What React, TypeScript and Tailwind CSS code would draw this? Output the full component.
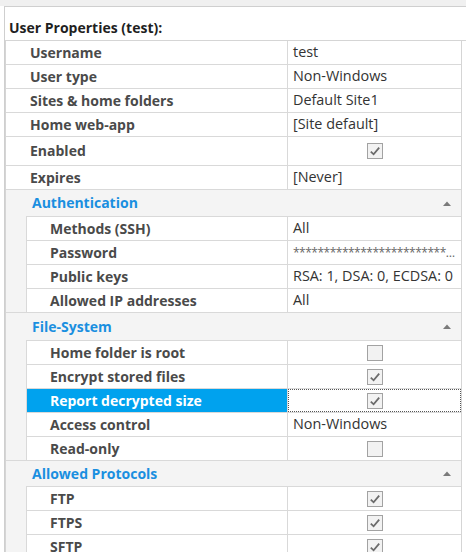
import React from "react";

type Val = string | { check: boolean };

type Row = { label: string; value: Val; h?: string; selected?: boolean; truncate?: boolean };

const topRows: Row[] = [
  { label: "Username", value: "test" },
  { label: "User type", value: "Non-Windows" },
  { label: "Sites & home folders", value: "Default Site1" },
  { label: "Home web-app", value: "[Site default]" },
  { label: "Enabled", value: { check: true }, h: "h-[29px]" },
  { label: "Expires", value: "[Never]" },
];

const groups: { title: string; h: string; rows: Row[] }[] = [
  {
    title: "Authentication",
    h: "h-[26px]",
    rows: [
      { label: "Methods (SSH)", value: "All" },
      { label: "Password", value: "*".repeat(40), truncate: true },
      { label: "Public keys", value: "RSA: 1, DSA: 0, ECDSA: 0" },
      { label: "Allowed IP addresses", value: "All" },
    ],
  },
  {
    title: "File-System",
    h: "h-[27px]",
    rows: [
      { label: "Home folder is root", value: { check: false } },
      { label: "Encrypt stored files", value: { check: true } },
      { label: "Report decrypted size", value: { check: true }, selected: true },
      { label: "Access control", value: "Non-Windows" },
      { label: "Read-only", value: { check: false } },
    ],
  },
  {
    title: "Allowed Protocols",
    h: "h-[25px]",
    rows: [
      { label: "FTP", value: { check: true } },
      { label: "FTPS", value: { check: true } },
      { label: "SFTP", value: { check: true } },
    ],
  },
];

function CheckBox({ checked }: { checked: boolean }) {
  return (
    <div className="w-[16px] h-[16px] border border-[#a2a2a2] bg-[#f2f2f2] flex items-center justify-center">
      {checked && (
        <svg width="14" height="14" viewBox="0 0 14 14">
          <polyline points="2.8,7.6 5.6,10.3 11.2,3.6" fill="none" stroke="#6b6b6b" strokeWidth="1.8" />
        </svg>
      )}
    </div>
  );
}

function Value({ row }: { row: Row }) {
  if (typeof row.value !== "string") {
    return (
      <div
        className={
          "flex-1 flex items-center justify-center h-full " +
          (row.selected ? "border border-dotted border-[#555]" : "")
        }
      >
        <CheckBox checked={row.value.check} />
      </div>
    );
  }
  if (row.truncate) {
    return (
      <div className="flex-1 min-w-0 pl-[5px] pr-[4px] flex items-center h-full">
        <span className="block overflow-hidden text-ellipsis whitespace-nowrap text-[#666] text-[12px] tracking-[-0.5px]">
          {row.value}
        </span>
      </div>
    );
  }
  return (
    <div className="flex-1 min-w-0 pl-[5px] flex items-center h-full text-[#333] text-[14.4px] whitespace-nowrap overflow-hidden">
      {row.value}
    </div>
  );
}

function TopRow({ row }: { row: Row }) {
  return (
    <div className={"flex border-b border-[#d9d9d9] " + (row.h ?? "h-[24px]")}>
      <div className="w-[282px] shrink-0 border-r border-[#d9d9d9] pl-[24px] flex items-center font-bold text-[#4a4a4a]">
        {row.label}
      </div>
      <Value row={row} />
    </div>
  );
}

function NestedRow({ row }: { row: Row }) {
  return (
    <div className="flex border-t border-[#d9d9d9] h-[24px] bg-white">
      <div
        className={
          "w-[261px] shrink-0 border-r border-[#d9d9d9] pl-[23px] flex items-center font-bold " +
          (row.selected ? "bg-[#00a2ee] text-white" : "text-[#4a4a4a]")
        }
      >
        {row.label}
      </div>
      <Value row={row} />
    </div>
  );
}

export default function App() {
  return (
    <div className="w-[466px] h-[552px] overflow-hidden bg-white text-[14px] font-['Open_Sans',sans-serif] leading-none">
      <div className="h-[6px] bg-[#f0f0f0]" />
      <div className="ml-[4px] border-l border-t border-[#cfcfcf]">
        <div className="h-[34px] border-b border-[#d5d5d5] flex items-end pl-[4px] pb-[5px] font-bold text-[#1f1f1f]">
          User Properties (test):
        </div>
        <div className="w-[457px] border-l border-r border-[#d5d5d5]">
          {topRows.map((r) => (
            <TopRow key={r.label} row={r} />
          ))}
          {groups.map((g) => (
            <div key={g.title} className="bg-[#f4f4f4] border-b border-[#d9d9d9]">
              <div className={"flex items-center justify-between pl-[26px] pr-[10px] " + g.h}>
                <span className="font-bold text-[#1a8fe0]">{g.title}</span>
                <svg width="8" height="5" viewBox="0 0 8 5">
                  <polygon points="0,5 8,5 4,0.5" fill="#7a7a7a" />
                </svg>
              </div>
              <div className="ml-[20px] border-l border-[#d9d9d9]">
                {g.rows.map((r) => (
                  <NestedRow key={r.label} row={r} />
                ))}
              </div>
            </div>
          ))}
        </div>
      </div>
    </div>
  );
}
